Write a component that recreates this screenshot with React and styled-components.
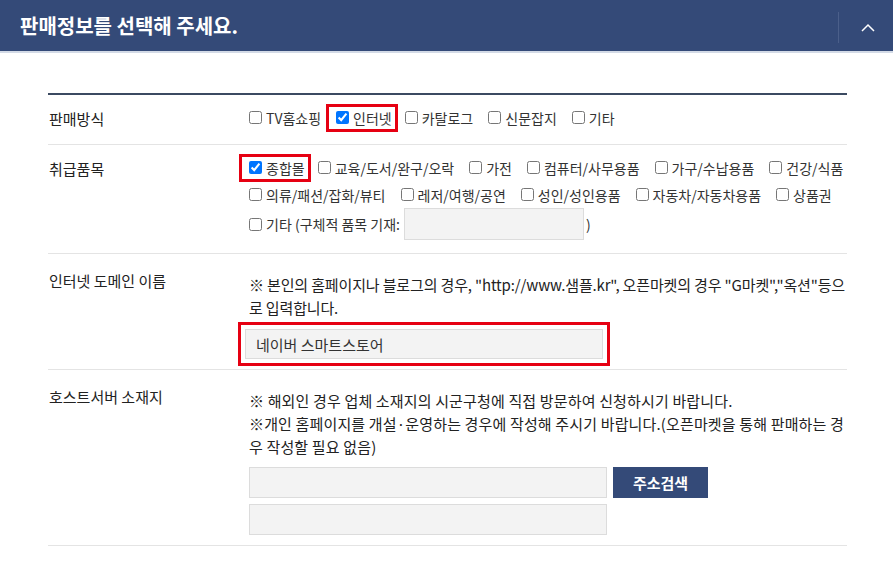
import React from 'react';
import styled, { createGlobalStyle } from 'styled-components';

const GlobalStyle = createGlobalStyle`
  body {
    margin: 0;
    background: #fff;
    font-family: "Noto Sans CJK KR", "Noto Sans", sans-serif;
    color: #222;
  }
`;

const Header = styled.div`
  display: flex;
  align-items: stretch;
  height: 51px;
  background: #344a78;
  border-bottom: 2px solid #d3dae6;
`;

const Title = styled.h2`
  flex: 1;
  margin: 0;
  padding-left: 20px;
  display: flex;
  align-items: center;
  font-size: 20px;
  font-weight: 700;
  color: #fff;
`;

const Toggle = styled.div`
  width: 50px;
  margin: 12px 0 8px;
  border-left: 1px solid #4b5f8a;
  display: flex;
  align-items: center;
  justify-content: center;
  padding-left: 4px;
`;

const Content = styled.div`
  padding: 40px 46px 0 48px;
`;

const Table = styled.div`
  border-top: 2px solid #3b4a61;
`;

const Row = styled.div`
  display: grid;
  grid-template-columns: 201px 1fr;
  border-bottom: 1px solid #e4e4e4;
  padding: ${p => (p.$desc ? '19px 0 10px' : '9px 0 13px')};
`;

const Label = styled.div`
  padding: ${p => (p.$desc ? '0' : '5px')} 0 0 1px;
  margin-top: ${p => (p.$desc ? '-2px' : '0')};
  font-size: 15px;
  line-height: 20px;
  color: #222;
`;

const Line = styled.div`
  display: flex;
  align-items: center;
  white-space: nowrap;
  min-height: 27px;
`;

const Item = styled.label`
  display: inline-flex;
  align-items: center;
  gap: 4px;
  margin-right: 15px;
  font-size: 14px;
  color: #333;
  ${p =>
    p.$marked &&
    `
    margin: -2px 7px -2px -10px;
    padding: 1px 3px 1px 7px;
    border: 3px solid #e60012;
  `}
`;

const Box = styled.input`
  margin: 0;
  width: 13px;
  height: 13px;
`;

const Field = styled.input`
  box-sizing: border-box;
  width: ${p => p.$w || 358}px;
  height: ${p => p.$h || 31}px;
  background: #f3f3f3;
  border: 1px solid #dcdcdc;
  padding: 0 10px;
  font-family: inherit;
  font-size: 15px;
  color: #333;
  outline: none;
`;

const Etc = styled(Field)`
  margin: 0 2px 0 4px;
`;

const Desc = styled.p`
  margin: 0;
  font-size: 15px;
  line-height: 23px;
  letter-spacing: ${p => p.$ls || '-0.15px'};
  color: #222;
  white-space: nowrap;
`;

const Marked = styled.div`
  display: inline-flex;
  margin: 3px -4px -7px -11px;
  padding: 4px;
  border: 3px solid #e60012;
  align-self: flex-start;
`;

const Stack = styled.div`
  display: flex;
  flex-direction: column;
  gap: 6px;
  margin-top: 9px;
`;

const InputRow = styled.div`
  display: flex;
  gap: 6px;
`;

const Button = styled.button`
  width: 95px;
  height: 31px;
  border: 0;
  background: #344a78;
  color: #fff;
  font-family: inherit;
  font-size: 15px;
  font-weight: 700;
`;

const Check = ({ children, checked, marked }) => (
  <Item $marked={marked}>
    <Box type="checkbox" defaultChecked={checked} />
    {children}
  </Item>
);

export default function App() {
  return (
    <>
      <GlobalStyle />
      <Header>
        <Title>판매정보를 선택해 주세요.</Title>
        <Toggle>
          <svg width="14" height="9" viewBox="0 0 14 9">
            <polyline points="1,8 7,2 13,8" fill="none" stroke="#fff" strokeWidth="1.5" />
          </svg>
        </Toggle>
      </Header>
      <Content>
        <Table>
          <Row>
            <Label>판매방식</Label>
            <div>
              <Line>
                <Check>TV홈쇼핑</Check>
                <Check checked marked>인터넷</Check>
                <Check>카탈로그</Check>
                <Check>신문잡지</Check>
                <Check>기타</Check>
              </Line>
            </div>
          </Row>
          <Row>
            <Label>취급품목</Label>
            <div>
              <Line>
                <Check checked marked>종합몰</Check>
                <Check>교육/도서/완구/오락</Check>
                <Check>가전</Check>
                <Check>컴퓨터/사무용품</Check>
                <Check>가구/수납용품</Check>
                <Check>건강/식품</Check>
              </Line>
              <Line>
                <Check>의류/패션/잡화/뷰티</Check>
                <Check>레저/여행/공연</Check>
                <Check>성인/성인용품</Check>
                <Check>자동차/자동차용품</Check>
                <Check>상품권</Check>
              </Line>
              <Line>
                <Item as="span" style={{ marginRight: 0 }}>
                  <Box type="checkbox" />
                  기타 (구체적 품목 기재:
                </Item>
                <Etc $w={180} $h={32} />
                <Item as="span">)</Item>
              </Line>
            </div>
          </Row>
          <Row $desc>
            <Label $desc>인터넷 도메인 이름</Label>
            <div>
              <Desc>
                ※ 본인의 홈페이지나 블로그의 경우, "http://www.샘플.kr", 오픈마켓의 경우 "G마켓","옥션"등으
                <br />로 입력합니다.
              </Desc>
              <Marked>
                <Field $w={358} $h={30} defaultValue="네이버 스마트스토어" />
              </Marked>
            </div>
          </Row>
          <Row $desc>
            <Label $desc>호스트서버 소재지</Label>
            <div>
              <Desc $ls="0.15px">
                ※ 해외인 경우 업체 소재지의 시군구청에 직접 방문하여 신청하시기 바랍니다.
                <br />※개인 홈페이지를 개설·운영하는 경우에 작성해 주시기 바랍니다.(오픈마켓을 통해 판매하는 경
                <br />우 작성할 필요 없음)
              </Desc>
              <Stack>
                <InputRow>
                  <Field />
                  <Button>주소검색</Button>
                </InputRow>
                <Field />
              </Stack>
            </div>
          </Row>
        </Table>
      </Content>
    </>
  );
}
